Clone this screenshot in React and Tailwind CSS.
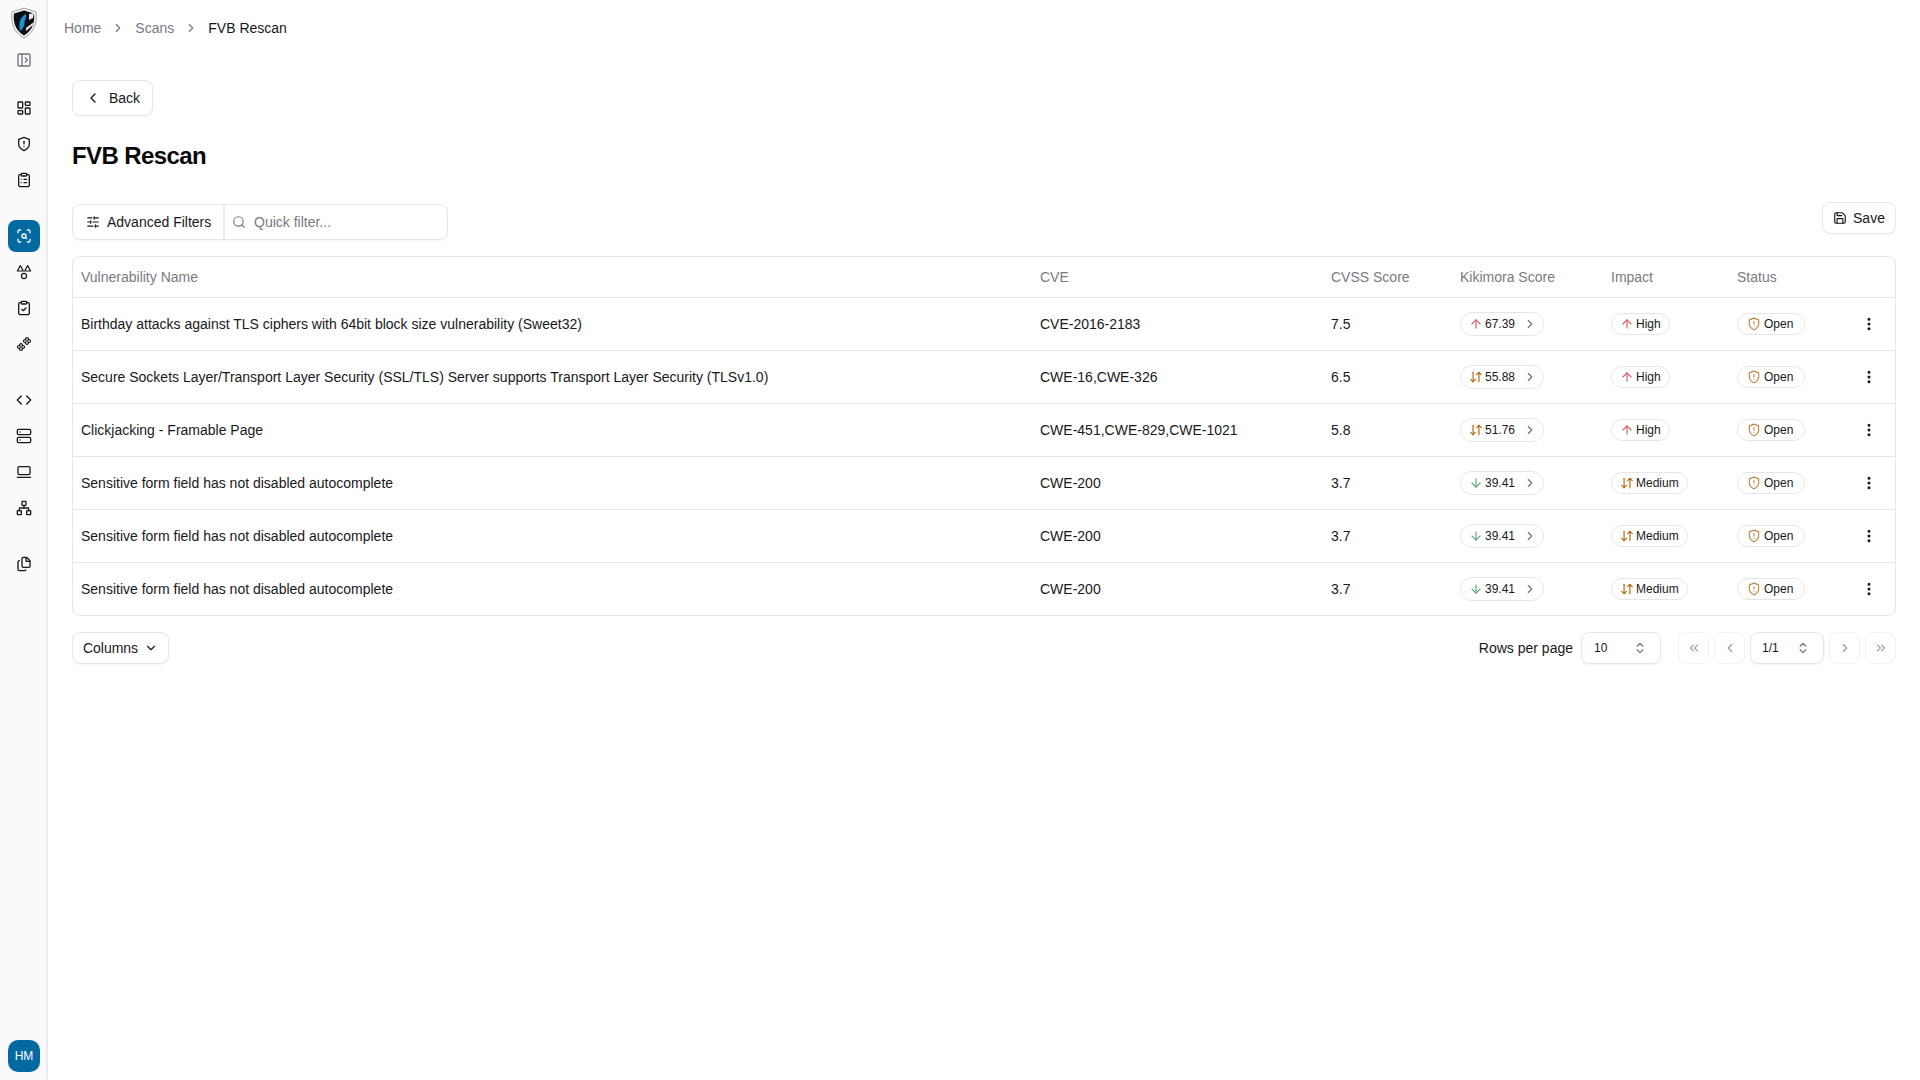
import React from "react";
import {
  PanelLeftOpen, LayoutDashboard, ClipboardList, ScanSearch, ClipboardCheck,
  Code, Server, LaptopMinimal, Network, Files, ChevronRight, ChevronLeft, ChevronDown, ChevronsUpDown,
  ChevronsLeft, ChevronsRight, SlidersHorizontal, Search, Save, ArrowUp, ArrowDown, ArrowDownUp, EllipsisVertical,
} from "lucide-react";

const Logo = () => (
  <svg width="30" height="32" viewBox="0 0 30 32" fill="none">
    <path d="M15 1 L27 5 C28 14 27 24 15 31 C3 24 2 14 3 5 Z" fill="#f4f4f4" stroke="#8a8a8a" strokeWidth="0.8" />
    <path d="M15 3.5 L25 6.5 C26 14 24.5 23 15 28.5 C5.5 23 4 14 5 6.5 Z" fill="#0c0f14" />
    <path d="M16.5 7 C12 10 9 15 11 24 C14 22 16 18 15.5 14 C17 12 17.5 9 16.5 7 Z" fill="#1593d6" />
    <path d="M20 7 L25 6 L24 11 L20 13 Z" fill="#e8e8e8" />
    <path d="M17 21 L25 15 L24 18 L17 24 Z" fill="#e8e8e8" />
  </svg>
);

const ShieldOld = ({ size = 16, className = "" }) => (
  <svg width={size} height={size} viewBox="0 0 24 24" fill="none" stroke="currentColor" strokeWidth="2" strokeLinecap="round" strokeLinejoin="round" className={className}>
    <path d="M12 22s8-4 8-10V5l-8-3-8 3v7c0 6 8 10 8 10" />
    <path d="M12 8v4" />
    <path d="M12 16h.01" />
  </svg>
);

const TriCircles = () => (
  <svg width="16" height="16" viewBox="0 0 24 24" fill="none" stroke="currentColor" strokeWidth="1.8" strokeLinejoin="round" strokeLinecap="round">
    <path d="M6.5 2.5 L11 10.5 L2 10.5 Z" />
    <path d="M17.5 2.5 L22 10.5 L13 10.5 Z" />
    <circle cx="12" cy="18" r="3.8" />
  </svg>
);

const cloverPath = "M-1.09 -1.09 A2.2 2.2 0 1 1 1.09 -1.09 A2.2 2.2 0 1 1 1.09 1.09 A2.2 2.2 0 1 1 -1.09 1.09 A2.2 2.2 0 1 1 -1.09 -1.09 Z";

const Clovers = () => (
  <svg width="16" height="16" viewBox="0 0 24 24" fill="none" stroke="currentColor" strokeWidth="1.8" strokeLinejoin="round" strokeLinecap="round">
    <path d={cloverPath} transform="translate(16.5 7.5)" />
    <path d={cloverPath} transform="translate(7.5 16.5)" />
  </svg>
);

const NavIcon = ({ children, active, className = "" }) => (
  <div className={`flex h-8 w-8 items-center justify-center rounded-lg ${active ? "bg-[#0369a1] text-white" : "text-[#18181b]"} ${className}`}>
    {children}
  </div>
);

const rows = [
  { name: "Birthday attacks against TLS ciphers with 64bit block size vulnerability (Sweet32)", cve: "CVE-2016-2183", cvss: "7.5", score: "67.39", level: "up", impact: "High" },
  { name: "Secure Sockets Layer/Transport Layer Security (SSL/TLS) Server supports Transport Layer Security (TLSv1.0)", cve: "CWE-16,CWE-326", cvss: "6.5", score: "55.88", level: "mid", impact: "High" },
  { name: "Clickjacking - Framable Page", cve: "CWE-451,CWE-829,CWE-1021", cvss: "5.8", score: "51.76", level: "mid", impact: "High" },
  { name: "Sensitive form field has not disabled autocomplete", cve: "CWE-200", cvss: "3.7", score: "39.41", level: "down", impact: "Medium" },
  { name: "Sensitive form field has not disabled autocomplete", cve: "CWE-200", cvss: "3.7", score: "39.41", level: "down", impact: "Medium" },
  { name: "Sensitive form field has not disabled autocomplete", cve: "CWE-200", cvss: "3.7", score: "39.41", level: "down", impact: "Medium" },
];

const LevelIcon = ({ level }) => {
  if (level === "up") return <ArrowUp size={14} className="text-[#dc5b66]" />;
  if (level === "down") return <ArrowDown size={14} className="text-[#5baa7d]" />;
  return <ArrowDownUp size={14} className="text-[#b4690e]" />;
};

const PageBtn = ({ children }) => (
  <button className="flex h-[32px] w-[31px] items-center justify-center rounded-lg border border-[#f1f1f3] bg-white text-[#9a9aa2]">
    {children}
  </button>
);

export default function App() {
  return (
    <div className="flex h-[1080px] w-full overflow-hidden bg-white text-[14px] text-[#18181b]" style={{ fontFamily: '"Liberation Sans", Arial, sans-serif' }}>
      <aside className="flex h-full w-[48px] shrink-0 flex-col items-center border-r-2 border-[#ececee] bg-[#fafafa] pt-[7px] pl-[2px]">
        <Logo />
        <NavIcon className="mt-[5px]"><PanelLeftOpen size={16} className="text-[#71717a]" /></NavIcon>
        <div className="mt-[16px] flex flex-col gap-[4px]">
          <NavIcon><LayoutDashboard size={16} /></NavIcon>
          <NavIcon><ShieldOld /></NavIcon>
          <NavIcon><ClipboardList size={16} /></NavIcon>
        </div>
        <div className="mt-[24px] flex flex-col gap-[4px]">
          <NavIcon active><ScanSearch size={16} /></NavIcon>
          <NavIcon><TriCircles /></NavIcon>
          <NavIcon><ClipboardCheck size={16} /></NavIcon>
          <NavIcon><Clovers /></NavIcon>
        </div>
        <div className="mt-[24px] flex flex-col gap-[4px]">
          <NavIcon><Code size={16} /></NavIcon>
          <NavIcon><Server size={16} /></NavIcon>
          <NavIcon><LaptopMinimal size={16} /></NavIcon>
          <NavIcon><Network size={16} /></NavIcon>
        </div>
        <div className="mt-[24px]">
          <NavIcon><Files size={16} /></NavIcon>
        </div>
        <div className="mt-auto mb-[8px] flex h-8 w-8 items-center justify-center rounded-[10px] bg-[#0369a1] text-[12px] text-white">HM</div>
      </aside>

      <main className="min-w-0 flex-1">
        <nav className="flex h-[56px] items-center pl-[16px] text-[14px] text-[#7a7a82]">
          <span>Home</span>
          <ChevronRight size={14} className="mx-[10px]" />
          <span>Scans</span>
          <ChevronRight size={14} className="mx-[10px]" />
          <span className="text-[#18181b]">FVB Rescan</span>
        </nav>

        <div className="pl-[24px] pr-[24px]">
          <button className="mt-[24px] flex h-[36px] w-[81px] items-center justify-center gap-[8px] rounded-lg border border-[#e6e6e9] bg-white shadow-[0_1px_2px_rgba(0,0,0,0.04)]">
            <ChevronLeft size={16} />
            <span>Back</span>
          </button>
          <h1 className="mt-[24px] text-[24px] leading-[32px] font-bold tracking-tight text-[#09090b]">FVB Rescan</h1>

          <div className="mt-[32px] flex items-start justify-between">
            <div className="flex h-[36px] w-[376px] rounded-lg border border-[#e6e6e9] bg-white shadow-[0_1px_2px_rgba(0,0,0,0.04)]">
              <div className="flex w-[152px] items-center gap-[7px] border-r-2 border-[#ececee] pl-[13px]">
                <SlidersHorizontal size={14} />
                <span>Advanced Filters</span>
              </div>
              <div className="flex flex-1 items-center gap-[8px] pl-[7px] text-[#7a7a82]">
                <Search size={14} />
                <span>Quick filter...</span>
              </div>
            </div>
            <button className="-mt-[2px] flex h-[32px] w-[74px] items-center justify-center gap-[6px] rounded-lg border border-[#e6e6e9] bg-white shadow-[0_1px_2px_rgba(0,0,0,0.04)]">
              <Save size={14} />
              <span>Save</span>
            </button>
          </div>

          <div className="mt-[16px] overflow-hidden rounded-lg border border-[#e6e6e9]">
            <table className="w-full table-fixed border-collapse text-left">
              <colgroup>
                <col className="w-[959px]" />
                <col className="w-[291px]" />
                <col className="w-[129px]" />
                <col className="w-[151px]" />
                <col className="w-[126px]" />
                <col className="w-[115px]" />
                <col />
              </colgroup>
              <thead>
                <tr className="h-[40px] border-b border-[#e6e6e9] text-[#7a7a82]">
                  <th className="px-[8px] pt-[2px] font-normal">Vulnerability Name</th>
                  <th className="px-[8px] pt-[2px] font-normal">CVE</th>
                  <th className="px-[8px] pt-[2px] font-normal">CVSS Score</th>
                  <th className="px-[8px] pt-[2px] font-normal">Kikimora Score</th>
                  <th className="px-[8px] pt-[2px] font-normal">Impact</th>
                  <th className="px-[8px] pt-[2px] font-normal">Status</th>
                  <th></th>
                </tr>
              </thead>
              <tbody>
                {rows.map((r, i) => (
                  <tr key={i} className={`h-[53px] ${i < rows.length - 1 ? "border-b border-[#e6e6e9]" : ""}`}>
                    <td className="truncate px-[8px] pt-[2px]">{r.name}</td>
                    <td className="px-[8px] pt-[2px]">{r.cve}</td>
                    <td className="px-[8px] pt-[2px]">{r.cvss}</td>
                    <td className="px-[8px] pt-[2px]">
                      <span className="inline-flex h-[24px] w-[84px] items-center rounded-full border border-[#e6e6e9] pl-[8px] text-[12px]">
                        <LevelIcon level={r.level} />
                        <span className="ml-[2px]">{r.score}</span>
                        <ChevronRight size={14} className="ml-[8px] text-[#71717a]" />
                      </span>
                    </td>
                    <td className="px-[8px] pt-[2px]">
                      <span className="inline-flex h-[22px] items-center gap-[2px] rounded-full border border-[#e6e6e9] pr-[8px] pl-[8px] text-[12px]">
                        <LevelIcon level={r.impact === "High" ? "up" : "mid"} />
                        <span>{r.impact}</span>
                      </span>
                    </td>
                    <td className="px-[8px] pt-[2px]">
                      <span className="inline-flex h-[22px] w-[68px] items-center gap-[3px] rounded-full border border-[#e6e6e9] pl-[9px] text-[12px]">
                        <ShieldOld size={14} className="text-[#c08a46]" />
                        <span>Open</span>
                      </span>
                    </td>
                    <td className="pl-[17px]">
                      <EllipsisVertical size={16} strokeWidth={2.5} className="text-[#18181b]" />
                    </td>
                  </tr>
                ))}
              </tbody>
            </table>
          </div>

          <div className="mt-[16px] flex items-center justify-between">
            <button className="flex h-[32px] w-[97px] items-center justify-center gap-[6px] rounded-lg border border-[#e6e6e9] bg-white shadow-[0_1px_2px_rgba(0,0,0,0.04)]">
              <span>Columns</span>
              <ChevronDown size={14} />
            </button>
            <div className="flex items-center">
              <span className="mr-[8px]">Rows per page</span>
              <div className="mr-[17px] flex h-[32px] w-[80px] items-center justify-between rounded-lg border border-[#e6e6e9] pr-[13px] pl-[12px] text-[12px] shadow-[0_1px_2px_rgba(0,0,0,0.06)]">
                <span>10</span>
                <ChevronsUpDown size={14} className="text-[#71717a]" />
              </div>
              <div className="flex items-center gap-[5px]">
                <PageBtn><ChevronsLeft size={14} /></PageBtn>
                <PageBtn><ChevronLeft size={14} /></PageBtn>
                <div className="flex h-[32px] w-[74px] items-center justify-between rounded-lg border border-[#e6e6e9] pr-[13px] pl-[11px] text-[12px] shadow-[0_1px_2px_rgba(0,0,0,0.06)]">
                  <span>1/1</span>
                  <ChevronsUpDown size={14} className="text-[#71717a]" />
                </div>
                <PageBtn><ChevronRight size={14} /></PageBtn>
                <PageBtn><ChevronsRight size={14} /></PageBtn>
              </div>
            </div>
          </div>
        </div>
      </main>
    </div>
  );
}
